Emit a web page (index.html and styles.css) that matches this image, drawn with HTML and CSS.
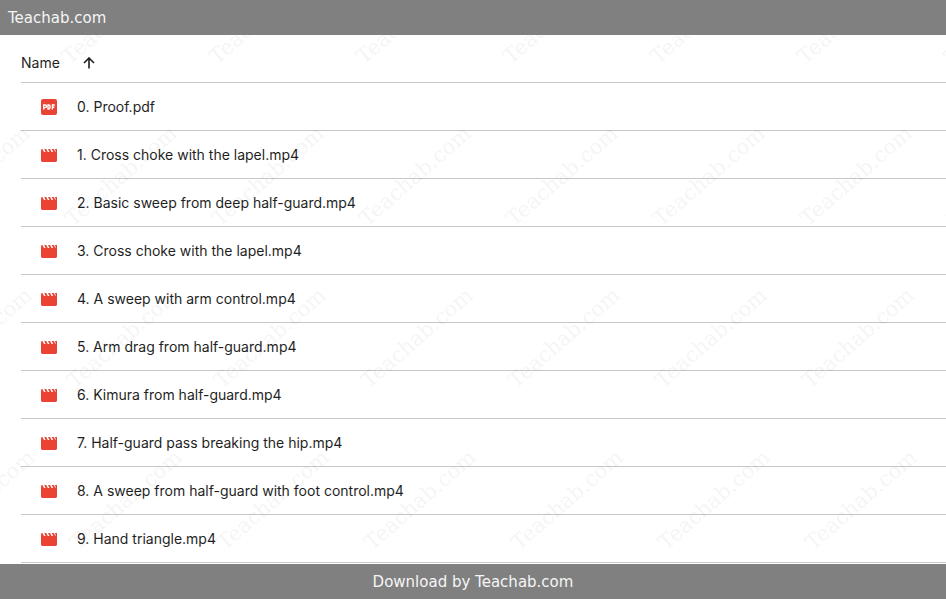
FILE: index.html
```
<!DOCTYPE html>
<html lang="en">
<head>
    <meta charset="UTF-8">
    <meta name="viewport" content="width=device-width, initial-scale=1.0">
    <title>Teachab.com</title>
    <link rel="stylesheet" href="styles.css">
</head>
<body>
    <svg class="sprites" aria-hidden="true">
        <symbol id="icon-pdf" viewBox="0 0 16 16">
            <rect width="16" height="16" rx="2" fill="#ea4335"/>
            <path d="M2.7 10.5V6h1.5a1.2 1.2 0 0 1 0 2.6H2.7M7 6v4h.8a1.2 1.2 0 0 0 1.2-1.2V7.2A1.2 1.2 0 0 0 7.8 6zM11.4 10.5V6h2.4M11.4 8.3h2" fill="none" stroke="#fff" stroke-width="1.4"/>
        </symbol>
        <symbol id="icon-video" viewBox="0 0 16 14">
            <path d="M1.4 1L3 4H4.600L3.200 1H5.200L6.800 4H8.400L7 1H9L10.600 4H12.200L10.800 1H12.800L14.200 3.600H15L13.800 1H16V12.600A1.400 1.400 0 0 1 14.600 14H1.400A1.400 1.400 0 0 1 0 12.600V2.400A1.400 1.400 0 0 1 1.400 1z" fill="#ea4335"/>
        </symbol>
    </svg>

    <header class="bar">Teachab.com</header>

    <main class="files">
        <table class="file-table">
            <thead>
                <tr>
                    <th colspan="2">
                        <button class="sort" type="button">Name
                            <svg class="arrow" viewBox="0 0 12 12" aria-hidden="true"><path d="M6 11.500V1M1 6l5-5 5 5" fill="none" stroke="#1f1f1f" stroke-width="1.600"/></svg>
                        </button>
                    </th>
                </tr>
            </thead>
            <tbody>
                <tr><td class="type"><svg class="pdf"><use href="#icon-pdf"/></svg></td><td>0. Proof.pdf</td></tr>
                <tr><td class="type"><svg class="video"><use href="#icon-video"/></svg></td><td>1. Cross choke with the lapel.mp4</td></tr>
                <tr><td class="type"><svg class="video"><use href="#icon-video"/></svg></td><td>2. Basic sweep from deep half-guard.mp4</td></tr>
                <tr><td class="type"><svg class="video"><use href="#icon-video"/></svg></td><td>3. Cross choke with the lapel.mp4</td></tr>
                <tr><td class="type"><svg class="video"><use href="#icon-video"/></svg></td><td>4. A sweep with arm control.mp4</td></tr>
                <tr><td class="type"><svg class="video"><use href="#icon-video"/></svg></td><td>5. Arm drag from half-guard.mp4</td></tr>
                <tr><td class="type"><svg class="video"><use href="#icon-video"/></svg></td><td>6. Kimura from half-guard.mp4</td></tr>
                <tr><td class="type"><svg class="video"><use href="#icon-video"/></svg></td><td>7. Half-guard pass breaking the hip.mp4</td></tr>
                <tr><td class="type"><svg class="video"><use href="#icon-video"/></svg></td><td>8. A sweep from half-guard with foot control.mp4</td></tr>
                <tr><td class="type"><svg class="video"><use href="#icon-video"/></svg></td><td>9. Hand triangle.mp4</td></tr>
            </tbody>
        </table>

        <!-- repeated diagonal watermark over the list -->
        <svg class="watermark" aria-hidden="true">
            <defs>
                <pattern id="mark" x="57" y="-130" width="147" height="648" patternUnits="userSpaceOnUse">
                    <text transform="translate(13 160) rotate(-41)">Teachab.com</text>
                    <text transform="translate(16 322) rotate(-41)">Teachab.com</text>
                    <text transform="translate(18 484) rotate(-41)">Teachab.com</text>
                    <text transform="translate(21 646) rotate(-41)">Teachab.com</text>
                </pattern>
            </defs>
            <rect width="100%" height="100%" fill="url(#mark)"/>
        </svg>
    </main>

    <footer class="bar bar-bottom">Download by Teachab.com</footer>
</body>
</html>
```
FILE: styles.css
```
body {
    margin: 0;
    background-color: #fff;
    color: #1f1f1f;
    font-family: Inter, sans-serif;
    font-size: 14px;
}
.sprites {
    display: none;
}
.bar {
    box-sizing: border-box;
    height: 35px;
    padding: 1px 8px 0;
    background-color: #808080;
    color: #f5f5f5;
    font-family: "DejaVu Sans", sans-serif;
    font-size: 15px;
    line-height: 34px;
}
.bar-bottom {
    text-align: center;
}
.files {
    position: relative;
    padding: 0 0 1px 21px;
}
.file-table {
    width: 100%;
    border-collapse: separate;
    border-spacing: 0;
}
th, td {
    height: 47px;
    padding: 0;
    border-bottom: 1px solid #c7c7c7;
    text-align: left;
}
.sort {
    display: flex;
    align-items: center;
    gap: 23px;
    padding: 8px 0 0;
    border: none;
    background: none;
    color: inherit;
    font: inherit;
    font-weight: 400;
    cursor: pointer;
}
.arrow {
    width: 12px;
    height: 12px;
}
.type {
    width: 56px;
}
.type svg {
    display: block;
    width: 16px;
    margin-left: 20px;
}
.pdf {
    height: 16px;
}
.video {
    height: 14px;
}
.watermark {
    position: absolute;
    top: 0;
    left: 0;
    width: 100%;
    height: 100%;
    pointer-events: none;
}
.watermark text {
    fill: #000;
    fill-opacity: 0.04;
    font-family: "DejaVu Serif", serif;
    font-size: 21px;
}
```
